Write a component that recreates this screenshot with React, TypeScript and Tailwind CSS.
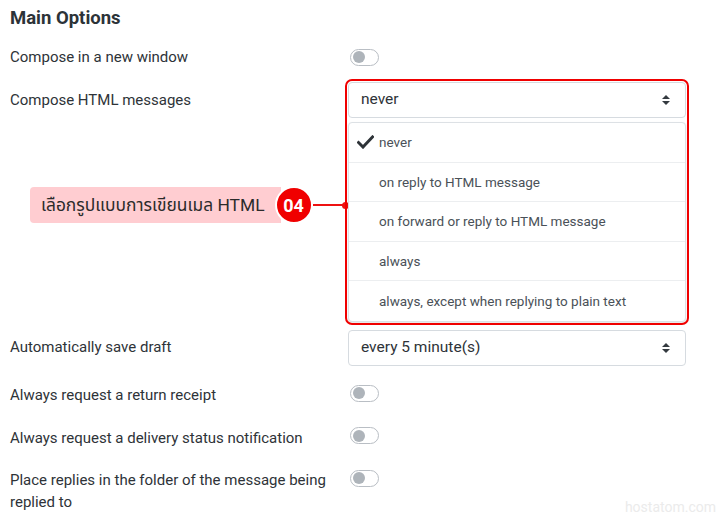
import React from "react";

const FONT = "font-['Roboto','Noto_Sans_Thai','Noto_Sans',sans-serif]";

function Toggle() {
  return (
    <div className="w-[29px] h-[17px] rounded-full border border-[#b9bec4] bg-white flex items-center px-[2px]">
      <div className="w-[12px] h-[12px] rounded-full bg-[#aeb4ba]" />
    </div>
  );
}

function Arrows() {
  return (
    <svg width="10" height="12" viewBox="0 0 10 12" className="text-[#343a40]">
      <path d="M1 5 L5 1 L9 5 Z" fill="currentColor" />
      <path d="M1 7 L5 11 L9 7 Z" fill="currentColor" />
    </svg>
  );
}

function Select({ value }: { value: string }) {
  return (
    <div className="h-[36px] w-[338px] border border-[#d6dbe0] rounded-[4px] bg-white flex items-center justify-between pl-[12px] pr-[14px] text-[15.5px] text-[#2e3338]">
      <span>{value}</span>
      <Arrows />
    </div>
  );
}

function Check() {
  return (
    <svg width="17" height="14" viewBox="0 0 17 14">
      <path d="M1.5 7.5 L6 12 L15.5 2" fill="none" stroke="#2e3338" strokeWidth="3" strokeLinecap="square" />
    </svg>
  );
}

const options = [
  "never",
  "on reply to HTML message",
  "on forward or reply to HTML message",
  "always",
  "always, except when replying to plain text",
];

export default function App() {
  return (
    <div className={`${FONT} relative w-[720px] h-[517px] overflow-hidden bg-white text-[#2e3338] px-[10px]`}>
      <h2 className="pt-[6px] text-[18.5px] leading-[24px] font-bold text-[#2c3338]">Main Options</h2>

      {/* Compose in a new window */}
      <div className="mt-[14px] h-[26px] flex items-center">
        <div className="w-[338px] text-[15px]">Compose in a new window</div>
        <div className="pl-[2px]">
          <Toggle />
        </div>
      </div>

      {/* Compose HTML messages + open dropdown */}
      <div className="mt-[12px] flex">
        <div className="w-[338px] relative">
          <div className="h-[36px] flex items-center text-[15px]">Compose HTML messages</div>
          {/* annotation callout */}
          <div className="absolute left-[20px] -right-[1px] top-[104px] flex items-center">
            <div className="h-[36px] bg-[#ffcdd1] rounded-l-[4px] pl-[11px] pr-[16px] flex items-center text-[17.4px] text-[#2b2b2b] -mr-[6px]">
              เลือกรูปแบบการเขียนเมล HTML
            </div>
            <div className="relative z-10 shrink-0 w-[38px] h-[38px] rounded-full bg-[#f00000] border-[2px] border-white flex items-center justify-center text-white font-bold text-[18px]">
              04
            </div>
            <div className="flex-1 h-[2px] bg-[#ee1111]" />
            <div className="shrink-0 w-[7px] h-[7px] rounded-full bg-[#ee1111] -ml-[4px]" />
          </div>
        </div>
        <div className="relative">
          <div className="absolute -left-[3px] -top-[3px] w-[344px] h-[246px] border-[2px] border-[#f00000] rounded-[7px] pointer-events-none" />
          <Select value="never" />
          <div className="mt-[4px] w-[338px] border border-[#dde1e5] rounded-[4px] shadow-[0_1px_2px_rgba(0,0,0,0.12)] bg-white">
            {options.map((o, i) => (
              <div
                key={o}
                className={`h-[39.6px] flex items-center text-[13.5px] text-[#4a5158] ${i < options.length - 1 ? "border-b border-[#eceef0]" : ""}`}
              >
                <div className="w-[30px] flex justify-center pl-[2px]">{i === 0 && <Check />}</div>
                <span>{o}</span>
              </div>
            ))}
          </div>
        </div>
      </div>

      {/* Automatically save draft */}
      <div className="mt-[8px] flex items-center">
        <div className="w-[338px] text-[15px] -mt-[2px]">Automatically save draft</div>
        <Select value="every 5 minute(s)" />
      </div>

      <div className="mt-[17px] h-[24px] flex items-center">
        <div className="w-[338px] text-[15px]">Always request a return receipt</div>
        <div className="pl-[2px] -mt-[3px]">
          <Toggle />
        </div>
      </div>

      <div className="mt-[19px] h-[24px] flex items-center">
        <div className="w-[338px] text-[15px]">Always request a delivery status notification</div>
        <div className="pl-[2px] -mt-[4px]">
          <Toggle />
        </div>
      </div>

      <div className="mt-[19px] flex items-start">
        <div className="w-[338px] text-[15px] leading-[22px] pr-[4px]">
          Place replies in the folder of the message being replied to
        </div>
        <div className="pl-[2px] pt-[1px]">
          <Toggle />
        </div>
      </div>

      <div className="absolute right-[4px] bottom-[-1px] text-[14px] text-[#ebebeb]">hostatom.com</div>
    </div>
  );
}
